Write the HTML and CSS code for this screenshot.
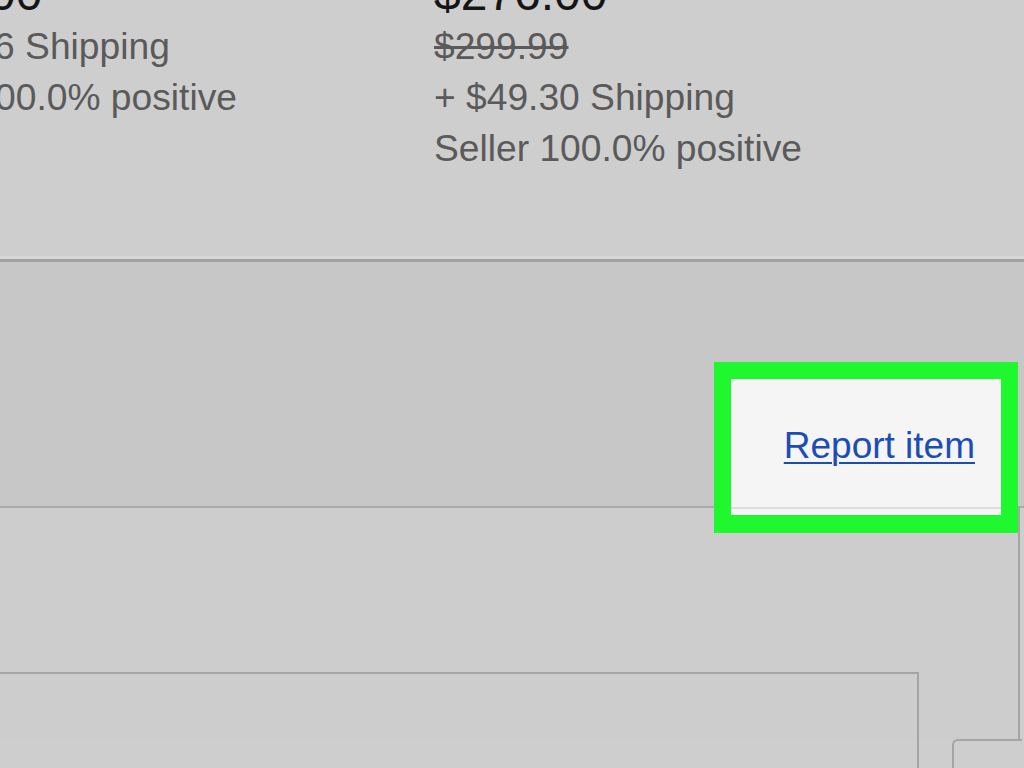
FILE: index.html
```html
<!DOCTYPE html>
<html>
<head>
<meta charset="utf-8">
<link rel="stylesheet" href="styles.css">
</head>
<body>
<div class="page">
  <section class="results">
    <div class="cols">
      <div class="col">
        <div class="price">$289.00</div>
        <div class="line">+ $45.56 Shipping</div>
        <div class="line">Seller 100.0% positive</div>
      </div>
      <div class="col">
        <div class="price">$276.00</div>
        <div class="line strike">$299.99</div>
        <div class="line">+ $49.30 Shipping</div>
        <div class="line">Seller 100.0% positive</div>
      </div>
    </div>
  </section>
  <section class="band">
    <div class="highlight">
      <span class="rule"></span>
      <a class="report" href="#">Report item</a>
    </div>
  </section>
  <section class="lower">
    <div class="inner-box"></div>
  </section>
  <div class="box-b"></div>
</div>
</body>
</html>
```
FILE: styles.css
```css
html, body {
  margin: 0;
  padding: 0;
  background: #cecece;
  overflow: hidden;
  width: 1024px;
  height: 768px;
}
.page {
  font-family: "Liberation Sans", Arial, sans-serif;
  width: 1024px;
  height: 768px;
  overflow: hidden;
}
.results {
  height: 259px;
  background: #cecece;
  border-bottom: 3px solid #a2a2a2;
  box-shadow: 0 -3px 0 #d6d6d6 inset;
  overflow: hidden;
}
.cols {
  display: flex;
  margin-left: -131px;
  margin-top: -34px;
}
.col {
  width: 565px;
  flex: none;
}
.price {
  font-size: 48px;
  line-height: 55px;
  color: #151515;
}
.line {
  font-size: 37.2px;
  line-height: 51px;
  color: #5a5a5a;
  white-space: nowrap;
}
.strike {
  text-decoration: line-through;
  text-decoration-thickness: 3px;
}
.band {
  background: #c7c7c7;
  border-bottom: 2px solid #a9a9a9;
  padding: 100px 6px 0 0;
  box-sizing: content-box;
  height: 144px;
  display: flex;
  justify-content: flex-end;
  align-items: flex-start;
}
.highlight {
  position: relative;
  z-index: 2;
  width: 304px;
  height: 171px;
  box-sizing: border-box;
  border: 17px solid #1ff72f;
  border-bottom-width: 18px;
  background: #f5f5f5;
  padding: 46px 26px 0 0;
  text-align: right;
}
.rule {
  position: absolute;
  left: 0;
  right: 0;
  top: 128px;
  height: 2px;
  background: #dcdcdc;
}
.report {
  font-size: 37px;
  line-height: 41px;
  color: #1c4db5;
  text-decoration: underline;
  text-decoration-thickness: 2px;
  text-underline-offset: 4px;
}
.lower {
  width: 1020px;
  height: 231px;
  background: #cdcdcd;
  border-right: 2px solid #a5a5a5;
  padding-top: 164px;
  box-sizing: border-box;
}
.inner-box {
  margin-left: -10px;
  width: 929px;
  height: 200px;
  box-sizing: border-box;
  border-top: 2px solid #a5a5a5;
  border-right: 2px solid #a5a5a5;
}
.box-b {
  margin-left: 952px;
  width: 70px;
  height: 40px;
  box-sizing: border-box;
  border-top: 2px solid #a5a5a5;
  border-left: 2px solid #a5a5a5;
  border-top-left-radius: 6px;
}
```
